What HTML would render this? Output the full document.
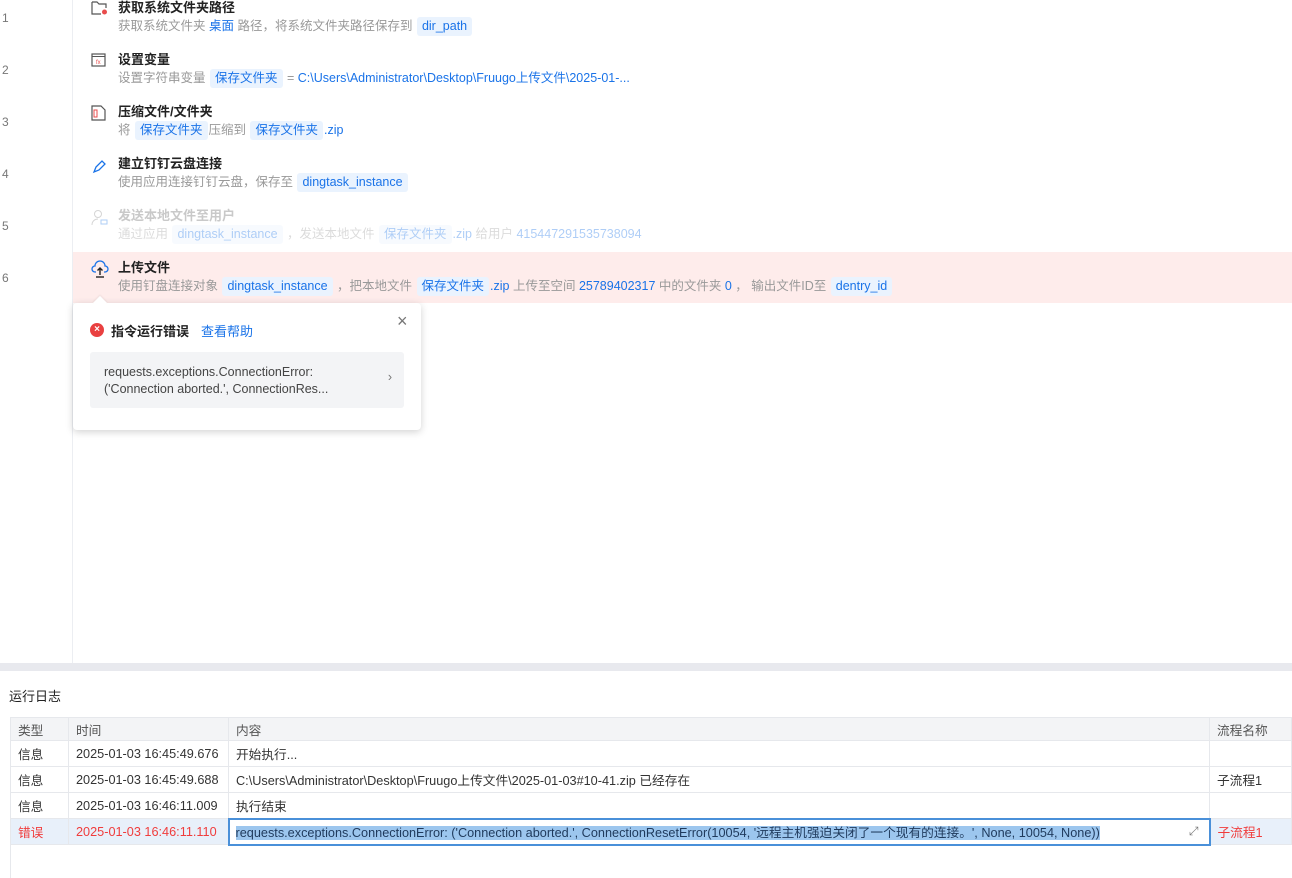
<!DOCTYPE html>
<html><head><meta charset="utf-8"><style>
*{margin:0;padding:0;box-sizing:border-box}
body{width:1292px;height:878px;overflow:hidden;background:#fff;font-family:"Liberation Sans","Noto Sans CJK SC",sans-serif;font-size:13px;color:#333;position:relative}
.ln{position:absolute;left:2px;color:#777;font-size:12px}
.gut{position:absolute;left:72px;top:0;width:1px;height:663px;background:#eceef2}
.row{position:absolute;left:73px;right:0;height:52px}
.ic{position:absolute;left:18px;top:0}
.t{position:absolute;left:45px;top:-3px;font-weight:bold;color:#222;font-size:13px;white-space:nowrap}
.d{position:absolute;left:45px;top:16px;color:#999;white-space:nowrap;font-size:12.5px;line-height:20px}
.tag{display:inline-block;background:#eaf3fe;color:#1a73e8;border-radius:3px;padding:0 5px;margin:0 1px;line-height:19px}
.b{color:#1a73e8}
.dim{opacity:.35}
table{position:absolute;left:10px;top:717px;border-collapse:collapse;width:1282px;font-size:12.7px}
td{border:1px solid #e6e8ec;height:26px;padding:0 7px;color:#333;white-space:nowrap}
th{border:1px solid #e6e8ec;height:23px;padding:0 7px;background:#f3f4f6;font-weight:normal;color:#555;text-align:left}
.err td{background:#e8f0fa;color:#f03c3c}
</style></head><body>
<div class="gut"></div>
<div class="ln" style="top:11px">1</div>
<div class="ln" style="top:63px">2</div>
<div class="ln" style="top:115px">3</div>
<div class="ln" style="top:167px">4</div>
<div class="ln" style="top:219px">5</div>
<div class="ln" style="top:271px">6</div>

<div class="row" style="top:0">
<svg class="ic" width="18" height="16" viewBox="0 0 18 16"><path d="M1 2h5l2 2h7v4M1 2v12h9" fill="none" stroke="#555" stroke-width="1.2"/><circle cx="13.5" cy="12" r="2.5" fill="#e94c4c"/></svg>
<div class="t">获取系统文件夹路径</div>
<div class="d" style="top:16px">获取系统文件夹 <span class="b">桌面</span> 路径，将系统文件夹路径保存到 <span class="tag">dir_path</span></div>
</div>
<div class="row" style="top:52px">
<svg class="ic" style="top:1px" width="16" height="15" viewBox="0 0 16 15"><rect x="1" y="1" width="13" height="12" fill="none" stroke="#555" stroke-width="1.2"/><line x1="1" y1="3.5" x2="14" y2="3.5" stroke="#555"/><text x="5" y="11" font-size="6" fill="#e94c4c">fx</text></svg>
<div class="t">设置变量</div>
<div class="d">设置字符串变量 <span class="tag">保存文件夹</span> = <span class="b">C:\Users\Administrator\Desktop\Fruugo上传文件\2025-01-...</span></div>
</div>
<div class="row" style="top:104px">
<svg class="ic" style="top:1px" width="16" height="16" viewBox="0 0 16 16"><path d="M1 1h9l4 4v10H1z" fill="none" stroke="#555" stroke-width="1.2"/><rect x="3" y="5" width="3" height="7" fill="none" stroke="#e94c4c"/></svg>
<div class="t">压缩文件/文件夹</div>
<div class="d">将 <span class="tag">保存文件夹</span>压缩到 <span class="tag">保存文件夹</span><span class="b">.zip</span></div>
</div>
<div class="row" style="top:156px">
<svg class="ic" style="top:2px" width="16" height="16" viewBox="0 0 16 16"><path d="M3 14l2-5 6-6 3 3-6 6z" fill="none" stroke="#1a73e8" stroke-width="1.3"/></svg>
<div class="t">建立钉钉云盘连接</div>
<div class="d">使用应用连接钉钉云盘，保存至 <span class="tag">dingtask_instance</span></div>
</div>
<div class="row dim" style="top:208px">
<svg class="ic" style="top:1px" width="18" height="17" viewBox="0 0 18 17"><circle cx="7" cy="5" r="3.5" fill="none" stroke="#888"/><path d="M1 16c0-4 3-6 6-6" fill="none" stroke="#888"/><rect x="10" y="11" width="6" height="4" fill="none" stroke="#1a73e8"/></svg>
<div class="t" style="color:#666">发送本地文件至用户</div>
<div class="d">通过应用 <span class="tag">dingtask_instance</span> ，发送本地文件 <span class="tag">保存文件夹</span><span class="b">.zip</span> 给用户 <span class="b">415447291535738094</span></div>
</div>
<div class="row" style="top:252px;background:#feeceb;height:51px">
<svg class="ic" style="top:8px" width="18" height="18" viewBox="0 0 18 18"><path d="M5 12H4a3 3 0 0 1 0-6 5 5 0 0 1 10 0 3 3 0 0 1 0 6h-1" fill="none" stroke="#1a73e8" stroke-width="1.3"/><path d="M9 15V8M6.5 10.5L9 8l2.5 2.5" fill="none" stroke="#222" stroke-width="1.4"/><line x1="5" y1="17" x2="13" y2="17" stroke="#222" stroke-width="1.4"/></svg>
<div class="t" style="top:5px">上传文件</div>
<div class="d" style="top:24px">使用钉盘连接对象 <span class="tag">dingtask_instance</span> ，把本地文件 <span class="tag">保存文件夹</span><span class="b">.zip</span> 上传至空间 <span class="b">25789402317</span> 中的文件夹 <span class="b">0</span> ， 输出文件ID至 <span class="tag">dentry_id</span></div>
</div>

<div style="position:absolute;left:73px;top:303px;width:348px;height:127px;background:#fff;border-radius:4px;box-shadow:0 2px 8px rgba(0,0,0,.18)">
<div style="position:absolute;left:22px;top:-5px;width:10px;height:10px;background:#fff;transform:rotate(45deg);box-shadow:-1px -1px 2px rgba(0,0,0,.06)"></div>
<div style="position:absolute;left:17px;top:20px;width:14px;height:14px;border-radius:50%;background:#e94040;color:#fff;font-size:10px;line-height:14px;text-align:center;font-weight:bold">×</div>
<div style="position:absolute;left:38px;top:18px;font-weight:bold;color:#222;font-size:13px">指令运行错误</div>
<div style="position:absolute;left:128px;top:18px;color:#1a73e8;font-size:13px">查看帮助</div>
<div style="position:absolute;left:324px;top:8px;color:#777;font-size:18px">×</div>
<div style="position:absolute;left:17px;top:49px;width:314px;height:56px;background:#f3f4f6;border-radius:3px;padding:12px 14px;color:#444;font-size:12.5px;line-height:17px">requests.exceptions.ConnectionError:<br>('Connection aborted.', ConnectionRes...<span style="position:absolute;right:12px;top:17px;color:#777">›</span></div>
</div>

<div style="position:absolute;left:0;top:663px;width:1292px;height:8px;background:#e8e9ee"></div>
<div style="position:absolute;left:9px;top:686px;font-size:13px;color:#222">运行日志</div>
<div style="position:absolute;left:10px;top:717px;width:1px;height:161px;background:#e6e8ec"></div>
<table>
<tr><th style="width:58px">类型</th><th style="width:160px">时间</th><th>内容</th><th style="width:82px">流程名称</th></tr>
<tr><td>信息</td><td>2025-01-03 16:45:49.676</td><td>开始执行...</td><td></td></tr>
<tr><td>信息</td><td>2025-01-03 16:45:49.688</td><td>C:\Users\Administrator\Desktop\Fruugo上传文件\2025-01-03#10-41.zip 已经存在</td><td>子流程1</td></tr>
<tr><td>信息</td><td>2025-01-03 16:46:11.009</td><td>执行结束</td><td></td></tr>
<tr class="err"><td>错误</td><td>2025-01-03 16:46:11.110</td><td style="background:#fff;border:2px solid #4a90d9;color:#1f3a5c;position:relative;padding-left:6px"><span style="background:#9cc6ee">requests.exceptions.ConnectionError: ('Connection aborted.', ConnectionResetError(10054, '远程主机强迫关闭了一个现有的连接。', None, 10054, None))</span><span style="position:absolute;right:10px;top:4px;color:#777;font-size:12px">⤢</span></td><td>子流程1</td></tr>
</table>
</body></html>
